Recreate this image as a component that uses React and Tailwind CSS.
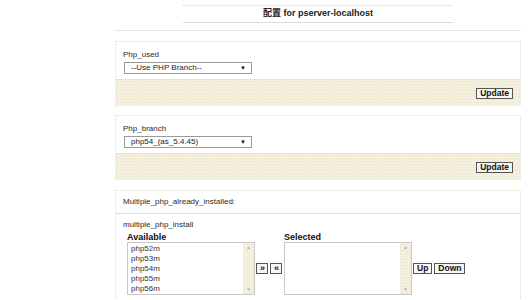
import React from 'react';

const dots = 'bg-white bg-[radial-gradient(circle,#ebebe4_0.6px,transparent_0.7px)] bg-[length:4px_4px]';
const beige = 'bg-[#f5f0de] bg-[radial-gradient(circle,#e9e2c8_0.7px,transparent_0.8px)] bg-[length:3px_3px]';

const Btn = ({ children, className = '' }) => (
  <button
    type="button"
    className={`h-[11px] px-[3px] border border-[#555] bg-[#f6f6f6] text-[8.5px] font-bold leading-none text-[#111] ${className}`}
  >
    {children}
  </button>
);

const FakeSelect = ({ value }) => (
  <div className="mt-[2px] ml-[1px] w-[128px] h-[12px] border border-[#9a9a9a] bg-white flex items-center justify-between pl-[6px] pr-[5px]">
    <span className="text-[8px] leading-none text-[#222]">{value}</span>
    <span className="text-[6px] leading-none text-[#111]">▼</span>
  </div>
);

const SelectPanel = ({ label, value }) => (
  <div className="border border-dotted border-[#dcdcd4]">
    <div className={`${dots} h-[37px] pl-[7px] pt-[7px]`}>
      <div className="text-[8px] leading-[11px] text-[#2a2a2a]">{label}</div>
      <FakeSelect value={value} />
    </div>
    <div className={`${beige} h-[26px] flex items-start justify-end pr-[7px] pt-[8px] border-t border-[#e6e2d2]`}>
      <Btn>Update</Btn>
    </div>
  </div>
);

const ListBox = ({ items }) => (
  <div className="w-[128px] h-[53px] border border-[#c8c8c8] bg-white flex">
    <div className="flex-1 pl-[3px] pt-[1px]">
      {items.map((it) => (
        <div key={it} className="text-[8px] leading-[10px] text-[#333]">{it}</div>
      ))}
    </div>
    <div className={`${beige} w-[11px] flex flex-col items-center justify-between py-[2px] text-[#b8b4a8] text-[5px] leading-none`}>
      <span>▲</span>
      <span>▼</span>
    </div>
  </div>
);

export default function App() {
  return (
    <div className="w-[530px] h-[300px] bg-white overflow-hidden pt-[5px] pl-[115px] font-['Liberation_Sans',sans-serif]">
      <div className="w-[406px]">
        <div className="mx-auto w-[270px]">
          <div className="border-t border-dotted border-[#d8d8c0]" />
          <div className="h-[16px] flex items-center justify-center">
            <span className="text-[9px] font-bold text-[#222] font-['Liberation_Sans','Noto_Sans_CJK_SC',sans-serif]">配置 for pserver-localhost</span>
          </div>
          <div className="border-t border-[#dcdcdc]" />
        </div>
        <div className="mt-[7px] border-t border-[#e2e2e2]" />

        <div className="mt-[10px]">
          <SelectPanel label="Php_used" value="--Use PHP Branch--" />
        </div>
        <div className="mt-[9px]">
          <SelectPanel label="Php_branch" value="php54_(as_5.4.45)" />
        </div>

        <div className={`mt-[10px] border border-dotted border-[#dcdcd4] ${dots}`}>
          <div className="h-[23px] pl-[7px] flex items-center border-b border-[#e0e0e0]">
            <span className="text-[8px] text-[#2a2a2a]">Multiple_php_already_installed:</span>
          </div>
          <div className="pl-[7px] pt-[5px] h-[100px]">
            <div className="text-[8px] leading-[11px] text-[#2a2a2a]">multiple_php_install</div>
            <div className="flex items-end mt-[2px]">
              <div className="ml-[4px]">
                <div className="text-[9px] font-bold leading-[10px] text-[#111]">Available</div>
                <ListBox items={['php52m', 'php53m', 'php54m', 'php55m', 'php56m']} />
              </div>
              <div className="flex gap-[2px] ml-[1px] mb-[21px]">
                <Btn className="w-[12px] px-0 text-[9px]">»</Btn>
                <Btn className="w-[12px] px-0 text-[9px]">«</Btn>
              </div>
              <div className="ml-[2px]">
                <div className="text-[9px] font-bold leading-[10px] text-[#111]">Selected</div>
                <ListBox items={[]} />
              </div>
              <div className="flex gap-[2px] ml-[1px] mb-[21px]">
                <Btn>Up</Btn>
                <Btn>Down</Btn>
              </div>
            </div>
          </div>
        </div>
      </div>
    </div>
  );
}
